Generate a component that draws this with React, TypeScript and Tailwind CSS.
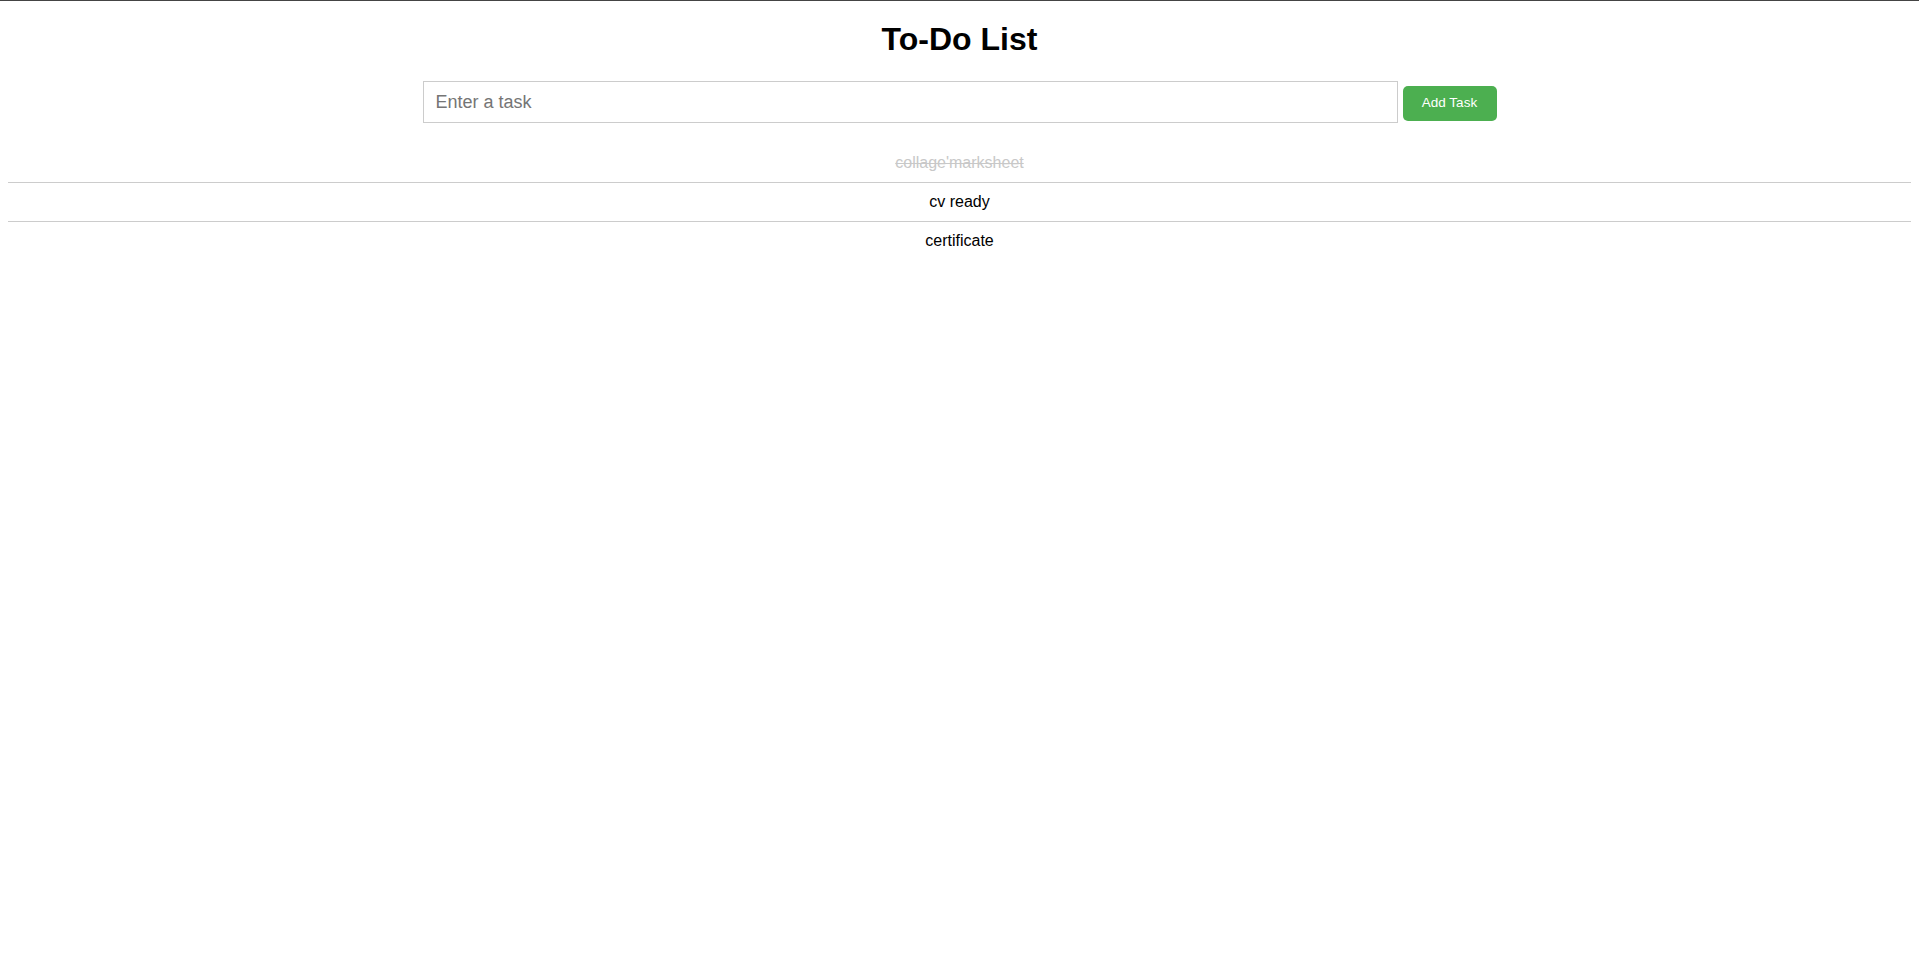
import React from "react";

const tasks = [
  { text: "collage'marksheet", done: true },
  { text: "cv ready", done: false },
  { text: "certificate", done: false },
];

export default function App() {
  return (
    <div
      className="min-h-[953px] w-full bg-white border-t border-[#444444] text-black"
      style={{ fontFamily: '"Liberation Sans", Arial, sans-serif' }}
    >
      <div className="mx-2">
        <h1 className="mt-[20px] text-center text-[32px] font-bold leading-[37px]">To-Do List</h1>
        <div className="mt-[23px] flex items-center justify-center gap-[5px]">
          <input
            type="text"
            placeholder="Enter a task"
            className="h-[42px] w-[975px] border border-[#cccccc] pl-[12px] pr-2 text-[18px] text-black placeholder:text-[#757575] outline-none"
            style={{ fontFamily: '"Liberation Sans", Arial, sans-serif' }}
          />
          <button className="mt-[3px] h-[35px] w-[94px] rounded-[5px] bg-[#4caf50] text-[13.5px] text-white">
            Add Task
          </button>
        </div>
        <ul className="mt-[21px]">
          {tasks.map((t, i) => (
            <li
              key={i}
              className={
                "py-[10px] text-center text-[16px] leading-[18px] " +
                (i < tasks.length - 1 ? "border-b border-[#cccccc] " : "") +
                (t.done ? "text-[#c8c8c8] line-through" : "text-black")
              }
            >
              {t.text}
            </li>
          ))}
        </ul>
      </div>
    </div>
  );
}
